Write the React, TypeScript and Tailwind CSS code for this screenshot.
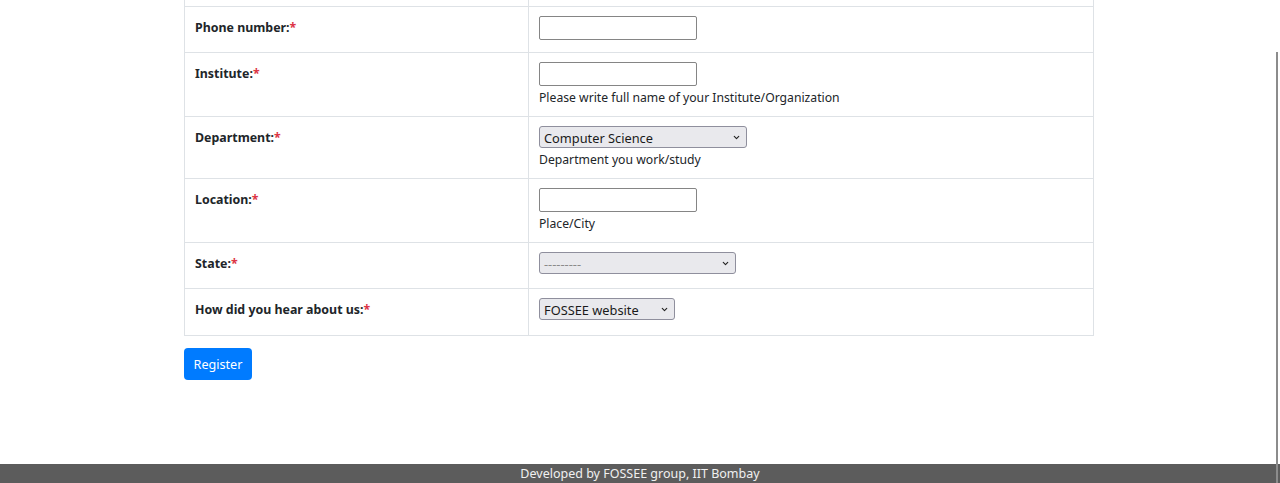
import { ChevronDown } from 'lucide-react';

type Field = {
  label: string;
  kind: 'input' | 'select';
  width: string;
  value?: string;
  placeholder?: boolean;
  help?: string;
  height: string;
};

const fields: Field[] = [
  { label: 'Phone number:', kind: 'input', width: 'w-[158px]', height: 'h-[46px]' },
  {
    label: 'Institute:',
    kind: 'input',
    width: 'w-[158px]',
    help: 'Please write full name of your Institute/Organization',
    height: 'h-[64px]',
  },
  {
    label: 'Department:',
    kind: 'select',
    width: 'w-[208px]',
    value: 'Computer Science',
    help: 'Department you work/study',
    height: 'h-[62px]',
  },
  { label: 'Location:', kind: 'input', width: 'w-[158px]', help: 'Place/City', height: 'h-[64px]' },
  { label: 'State:', kind: 'select', width: 'w-[197px]', value: '---------', placeholder: true, height: 'h-[46px]' },
  { label: 'How did you hear about us:', kind: 'select', width: 'w-[136px]', value: 'FOSSEE website', height: 'h-[47px]' },
];

function Control({ f }: { f: Field }) {
  if (f.kind === 'input') {
    return <div className={`${f.width} h-[24px] border border-[#858585] rounded-[2px] bg-white`} />;
  }
  return (
    <div
      className={`${f.width} h-[22px] border border-[#8f8f9d] rounded-[3px] bg-[#e9e9ed] flex items-center justify-between pl-[4px] pr-[5px]`}
    >
      <span className={`text-[12.8px] leading-none pt-[2px] ${f.placeholder ? 'text-[#8a8a8a]' : 'text-[#1a1a1a]'}`}>
        {f.value}
      </span>
      <ChevronDown className="w-[9px] h-[9px] text-[#222]" strokeWidth={3} />
    </div>
  );
}

export default function App() {
  return (
    <div className="relative w-[1280px] h-[483px] bg-white flex flex-col font-['Noto_Sans','Open_Sans',sans-serif] text-[#212529] overflow-hidden">
      <div className="ml-[184px] w-[910px] flex flex-col">
        <div className="flex h-[6px]">
          <div className="w-[345px] border-l border-r border-[#dee2e6]" />
          <div className="flex-1 border-r border-[#dee2e6]" />
        </div>
        {fields.map((f) => (
          <div key={f.label} className={`flex ${f.height} border-t border-[#dee2e6]`}>
            <div className="w-[345px] border-l border-r border-[#dee2e6] pl-[10px] pt-[7px]">
              <span className="text-[12.4px] font-bold leading-[19px]">
                {f.label}
                <span className="text-[#dc3545]">*</span>
              </span>
            </div>
            <div className="flex-1 border-r border-[#dee2e6] pl-[10px] pt-[9px]">
              <Control f={f} />
              {f.help && <div className="text-[12.2px] leading-[19px] mt-[2px] text-[#212529]">{f.help}</div>}
            </div>
          </div>
        ))}
        <div className="border-t border-[#dee2e6]" />
        <div className="mt-[12px]">
          <button className="w-[68px] h-[32px] pt-[3px] bg-[#007bff] text-white text-[12.6px] rounded-[4px]">Register</button>
        </div>
      </div>
      <div className="mt-auto h-[19px] bg-[#5c5c5c] text-[#f0f0f0] text-[12.5px] leading-[20px] text-center">
        Developed by FOSSEE group, IIT Bombay
      </div>
      <div className="absolute right-[2px] top-[52px] bottom-0 w-[2px] bg-[#8c8c8c]" />
    </div>
  );
}
